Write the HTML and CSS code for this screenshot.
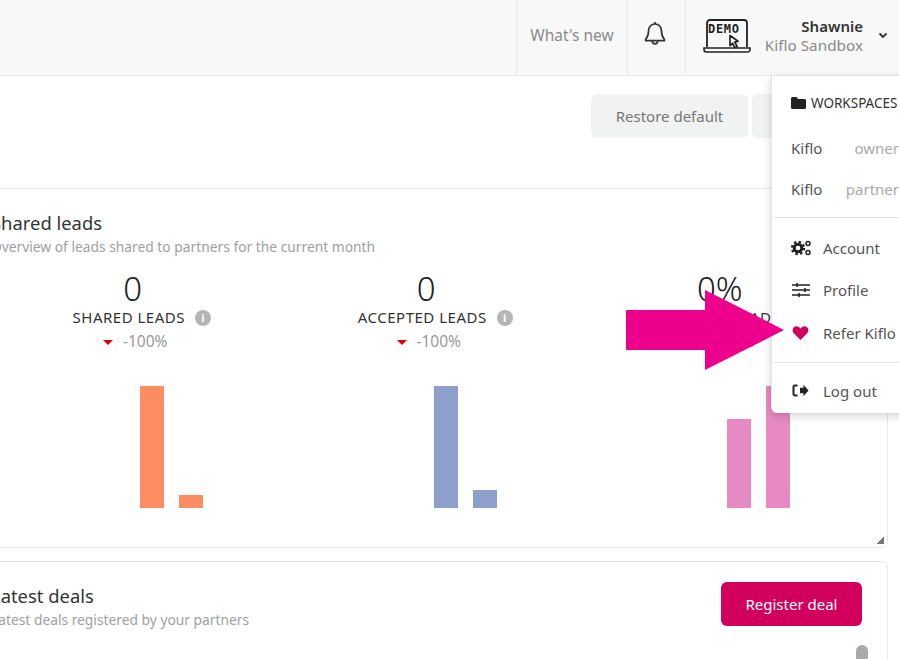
FILE: index.html
```html
<!DOCTYPE html>
<html lang="en">
<head>
    <meta charset="UTF-8">
    <meta name="viewport" content="width=device-width, initial-scale=1.0">
    <title>Kiflo</title>
    <link rel="stylesheet" href="styles.css">
</head>
<body>

    <!-- Top bar -->
    <div class="topbar">
        <div class="topbar-cell whats-new">What's new</div>
        <div class="topbar-cell bell">
            <svg width="24" height="26" viewBox="0 0 24 26" fill="none" stroke="#333" stroke-width="1.7" stroke-linejoin="round">
                <path d="M12 3c-4 0-6.400 3-6.400 6.600 0 5-1.200 6.800-3 8.900-.4.500-.1 1.200.6 1.200h17.600c.7 0 1-.7.6-1.200-1.800-2.100-3-3.900-3-8.900C18.400 6 16 3 12 3z"/>
                <path d="M12 1v2M9.300 20c0 1.600 1.200 2.800 2.700 2.800s2.700-1.200 2.700-2.800"/>
            </svg>
        </div>
        <div class="topbar-cell user">
            <svg class="demo-logo" width="48" height="36" viewBox="0 0 48 36" fill="none" stroke="#222">
                <path d="M4 29V5a3 3 0 0 1 3-3h34a3 3 0 0 1 3 3v24" stroke-width="1.800"/>
                <path d="M1 30h46v1.500a2.500 2.500 0 0 1-2.500 2.500h-41A2.500 2.500 0 0 1 1 31.500z" stroke-width="1.600"/>
                <path d="M27 17.500l8 5.800-3.400.7 2.600 4.400-2.200 1.300-2.600-4.400-2.400 2.300z" fill="#fff" stroke-width="1.700" stroke-linejoin="round"/>
                <text x="5" y="15" class="demo-text">DEMO</text>
            </svg>
            <div class="user-names">
                <div class="user-name">Shawnie</div>
                <div class="user-org">Kiflo Sandbox</div>
            </div>
            <svg class="caret" width="10" height="7" viewBox="0 0 10 7" fill="none" stroke="#333" stroke-width="1.800">
                <path d="M1.500 1.500L5 5l3.500-3.500"/>
            </svg>
        </div>
    </div>

    <!-- Toolbar -->
    <div class="content">
        <div class="toolbar">
            <button class="btn-grey">Restore default</button>
            <button class="btn-grey btn-cut" aria-label="Save"></button>
        </div>

        <div class="card card-leads">
            <h2>Shared leads</h2>
            <p class="sub">Overview of leads shared to partners for the current month</p>
            <div class="stats">
                <div class="stat">
                    <div class="num">0</div>
                    <div class="label">SHARED LEADS<span class="info">i</span></div>
                    <div class="delta"><span class="tri"></span>-100%</div>
                    <div class="chart">
                        <div class="bar orange tall"></div>
                        <div class="bar orange low1"></div>
                    </div>
                </div>
                <div class="stat">
                    <div class="num">0</div>
                    <div class="label">ACCEPTED LEADS<span class="info">i</span></div>
                    <div class="delta"><span class="tri"></span>-100%</div>
                    <div class="chart">
                        <div class="bar blue tall"></div>
                        <div class="bar blue low2"></div>
                    </div>
                </div>
                <div class="stat">
                    <div class="num">0%</div>
                    <div class="label">ACCEPTED LEADS<span class="info">i</span></div>
                    <div class="delta"><span class="tri"></span>-100%</div>
                    <div class="chart">
                        <div class="bar pink mid"></div>
                        <div class="bar pink tall"></div>
                    </div>
                </div>
            </div>
            <span class="resize"></span>
        </div>

        <div class="card card-deals">
            <div class="deals-head">
                <div>
                    <h2>Latest deals</h2>
                    <p class="sub">Latest deals registered by your partners</p>
                </div>
                <button class="btn-register">Register deal</button>
            </div>
            <span class="thumb"></span>
        </div>
    </div>

    <!-- Dropdown -->
    <div class="dropdown">
        <div class="dd-title">
            <svg width="15" height="12" viewBox="0 0 15 12" fill="#222"><path d="M1.500 0h4l1.500 2h6.500A1.500 1.500 0 0 1 15 3.500v7a1.500 1.500 0 0 1-1.500 1.500h-12A1.500 1.500 0 0 1 0 10.500v-9A1.500 1.500 0 0 1 1.500 0z"/></svg>
            WORKSPACES
        </div>
        <div class="dd-space"><span>Kiflo</span><span class="role">owner</span></div>
        <div class="dd-space"><span>Kiflo</span><span class="role">partner</span></div>
        <div class="dd-sep"></div>
        <div class="dd-item">
            <svg width="21" height="16" viewBox="0 0 21 16">
                <circle cx="7" cy="8" r="3.800" fill="none" stroke="#222" stroke-width="3"/>
                <circle cx="7" cy="8" r="6" fill="none" stroke="#222" stroke-width="2.400" stroke-dasharray="2.400 2.300"/>
                <circle cx="17" cy="3.500" r="2" fill="none" stroke="#222" stroke-width="1.500"/>
                <circle cx="17" cy="12.500" r="2" fill="none" stroke="#222" stroke-width="1.500"/>
            </svg>
            Account
        </div>
        <div class="dd-item">
            <svg width="21" height="16" viewBox="0 0 21 16" stroke="#222" stroke-width="1.600"><path d="M1 3h18M1 8h18M1 13h18M6 1v4M14 6v4M8 11v4"/></svg>
            Profile
        </div>
        <div class="dd-item">
            <svg width="21" height="16" viewBox="0 0 21 16" fill="#d0005c"><path d="M9.500 15L2.800 8.300C.4 5.800 1.900 1.200 5.500 1.200c1.800 0 3.100 1 4 2.400.9-1.400 2.200-2.400 4-2.400 3.600 0 5.100 4.600 2.700 7.100z"/></svg>
            Refer Kiflo
        </div>
        <div class="dd-sep"></div>
        <div class="dd-item">
            <svg width="21" height="16" viewBox="0 0 21 16"><path d="M6.500 2.500H4A1.500 1.500 0 0 0 2.500 4v7A1.500 1.500 0 0 0 4 12.500h2.500" fill="none" stroke="#222" stroke-width="2"/><path d="M9 4.700h3.500V1.800L17.500 7.500l-5 5.700v-2.900H9z" fill="#222"/></svg>
            Log out
        </div>
    </div>

    <!-- Annotation arrow -->
    <svg class="arrow" width="158" height="80" viewBox="0 0 158 80">
        <polygon points="0,20 79,20 79,0 158,40 79,80 79,60 0,60" fill="#ec008c"/>
    </svg>

</body>
</html>
```

FILE: styles.css
```css
* {
    margin: 0;
    padding: 0;
    box-sizing: border-box;
}

body {
    font-family: 'Noto Sans', sans-serif;
    background-color: #fff;
    color: #333;
    width: 899px;
    height: 659px;
    overflow: hidden;
    position: relative;
}

/* Top bar */
.topbar {
    display: flex;
    justify-content: flex-end;
    height: 76px;
    background-color: #f8f8f8;
    border-bottom: 1px solid #e8e8e8;
}

.topbar-cell {
    display: flex;
    align-items: center;
    border-left: 1px solid #e8e8e8;
}

.whats-new {
    width: 111px;
    justify-content: center;
    font-size: 15.500px;
    color: #8a8a8a;
    padding-bottom: 6px;
}

.bell {
    width: 58px;
    justify-content: center;
    padding: 0 3px 7px 0;
}

.user {
    width: 214px;
    padding: 0 11px 4px 17px;
}

.demo-logo {
    flex-shrink: 0;
}

.demo-text {
    font-family: 'DejaVu Sans Mono', monospace;
    font-size: 12px;
    font-weight: bold;
    fill: #222;
    stroke: none;
    letter-spacing: .7px;
}

.user-names {
    flex-grow: 1;
    text-align: right;
    line-height: 19px;
    font-size: 15.300px;
}

.user-name {
    font-weight: 600;
    font-size: 15px;
    color: #333;
}

.user-org {
    color: #8a8a8a;
}

.caret {
    margin-left: 15px;
}

/* Main content, runs off the left edge */
.content {
    margin-left: -34px;
    width: 922px;
}

.toolbar {
    display: flex;
    justify-content: flex-end;
    gap: 4px;
    height: 112px;
    padding-top: 18px;
    margin-right: -8px;
}

.btn-grey {
    height: 44px;
    width: 157px;
    border: none;
    border-radius: 6px;
    background-color: #f1f3f3;
    color: #777;
    font-family: inherit;
    font-size: 15px;
}

.btn-cut {
    width: 144px;
}

.card {
    position: relative;
    border: 1px solid #e8e8e8;
    border-radius: 6px;
    background-color: #fff;
}

.card h2 {
    font-size: 18.400px;
    font-weight: 400;
    color: #333;
    line-height: 24px;
}

.sub {
    font-size: 13.800px;
    color: #a0a0a0;
    line-height: 20px;
}

.card-leads {
    height: 360px;
    padding: 22px 20px 0 24px;
}

.card-leads .sub {
    margin-top: 2px;
}

.stats {
    display: flex;
    margin-top: 14px;
    margin-left: -5px;
}

.stat {
    width: 293.500px;
}

.num {
    font-size: 33px;
    font-weight: 300;
    line-height: 36px;
    text-align: center;
    color: #222;
}

.label {
    font-size: 15px;
    letter-spacing: .5px;
    line-height: 20px;
    text-align: center;
    color: #333;
    padding-left: 18px;
}

.info {
    display: inline-block;
    width: 16px;
    height: 16px;
    margin-left: 10px;
    border-radius: 50%;
    background-color: #b5b5b5;
    color: #fff;
    font-size: 11px;
    font-weight: 700;
    line-height: 16px;
    letter-spacing: 0;
    text-align: center;
    vertical-align: 1px;
}

.delta {
    font-size: 15.500px;
    color: #999;
    line-height: 20px;
    margin-top: 4px;
    text-align: center;
    padding-left: 5px;
}

.tri {
    display: inline-block;
    width: 0;
    height: 0;
    border-left: 5px solid transparent;
    border-right: 5px solid transparent;
    border-top: 5px solid #d40000;
    margin-right: 10px;
    vertical-align: 2px;
}

.chart {
    display: flex;
    align-items: flex-end;
    gap: 15px;
    height: 122px;
    margin-top: 35px;
    padding-left: 154px;
}

.bar {
    width: 24px;
}

.orange { background-color: #fc8d62; }
.blue { background-color: #8da0cb; }
.pink { background-color: #e78ac3; }

.tall { height: 122px; }
.mid { height: 89px; }
.low1 { height: 13px; }
.low2 { height: 18px; }

.resize {
    position: absolute;
    right: 3px;
    bottom: 3px;
    width: 7px;
    height: 7px;
    background: linear-gradient(135deg, transparent 50%, #777 50%);
}

.card-deals {
    margin-top: 13px;
    height: 200px;
    padding: 20px 25px 0 24px;
}

.deals-head {
    display: flex;
    justify-content: space-between;
    align-items: flex-start;
}

.card-deals h2 {
    margin-top: 2px;
}

.card-deals .sub {
    margin-top: 2px;
}

.btn-register {
    width: 141px;
    height: 44px;
    border: none;
    border-radius: 6px;
    background-color: #d0005c;
    color: #fff;
    font-family: inherit;
    font-size: 15px;
}

.thumb {
    position: absolute;
    top: 83px;
    right: 19px;
    width: 12px;
    height: 40px;
    border-radius: 6px;
    background-color: #aaa;
}

/* Dropdown */
.dropdown {
    position: absolute;
    top: 76px;
    left: 771px;
    width: 148px;
    height: 337px;
    padding: 0 20px 0 19px;
    background-color: #fff;
    border-left: 1px solid #e4e4e4;
    border-radius: 0 0 0 6px;
    box-shadow: 0 3px 10px rgba(0, 0, 0, 0.18);
    font-size: 15px;
    color: #555;
}

.dd-title {
    display: flex;
    align-items: center;
    gap: 5px;
    height: 20px;
    margin-top: 17px;
    margin-bottom: 25px;
    font-size: 13.500px;
    color: #333;
    white-space: nowrap;
}

.dd-space {
    display: flex;
    justify-content: space-between;
    height: 41px;
    line-height: 20px;
}

.role {
    color: #aaa;
}

.dd-sep {
    height: 1px;
    background-color: #e8e8e8;
    margin: 0 -20px 0 -19px;
}

.dd-space + .dd-sep {
    margin-top: -3px;
    margin-bottom: 9px;
}

.dd-item {
    display: flex;
    align-items: center;
    gap: 11px;
    height: 42.300px;
    white-space: nowrap;
}

.dd-item + .dd-sep {
    margin-top: 8px;
    margin-bottom: 7px;
}

.arrow {
    position: absolute;
    top: 290px;
    left: 626px;
}
```
